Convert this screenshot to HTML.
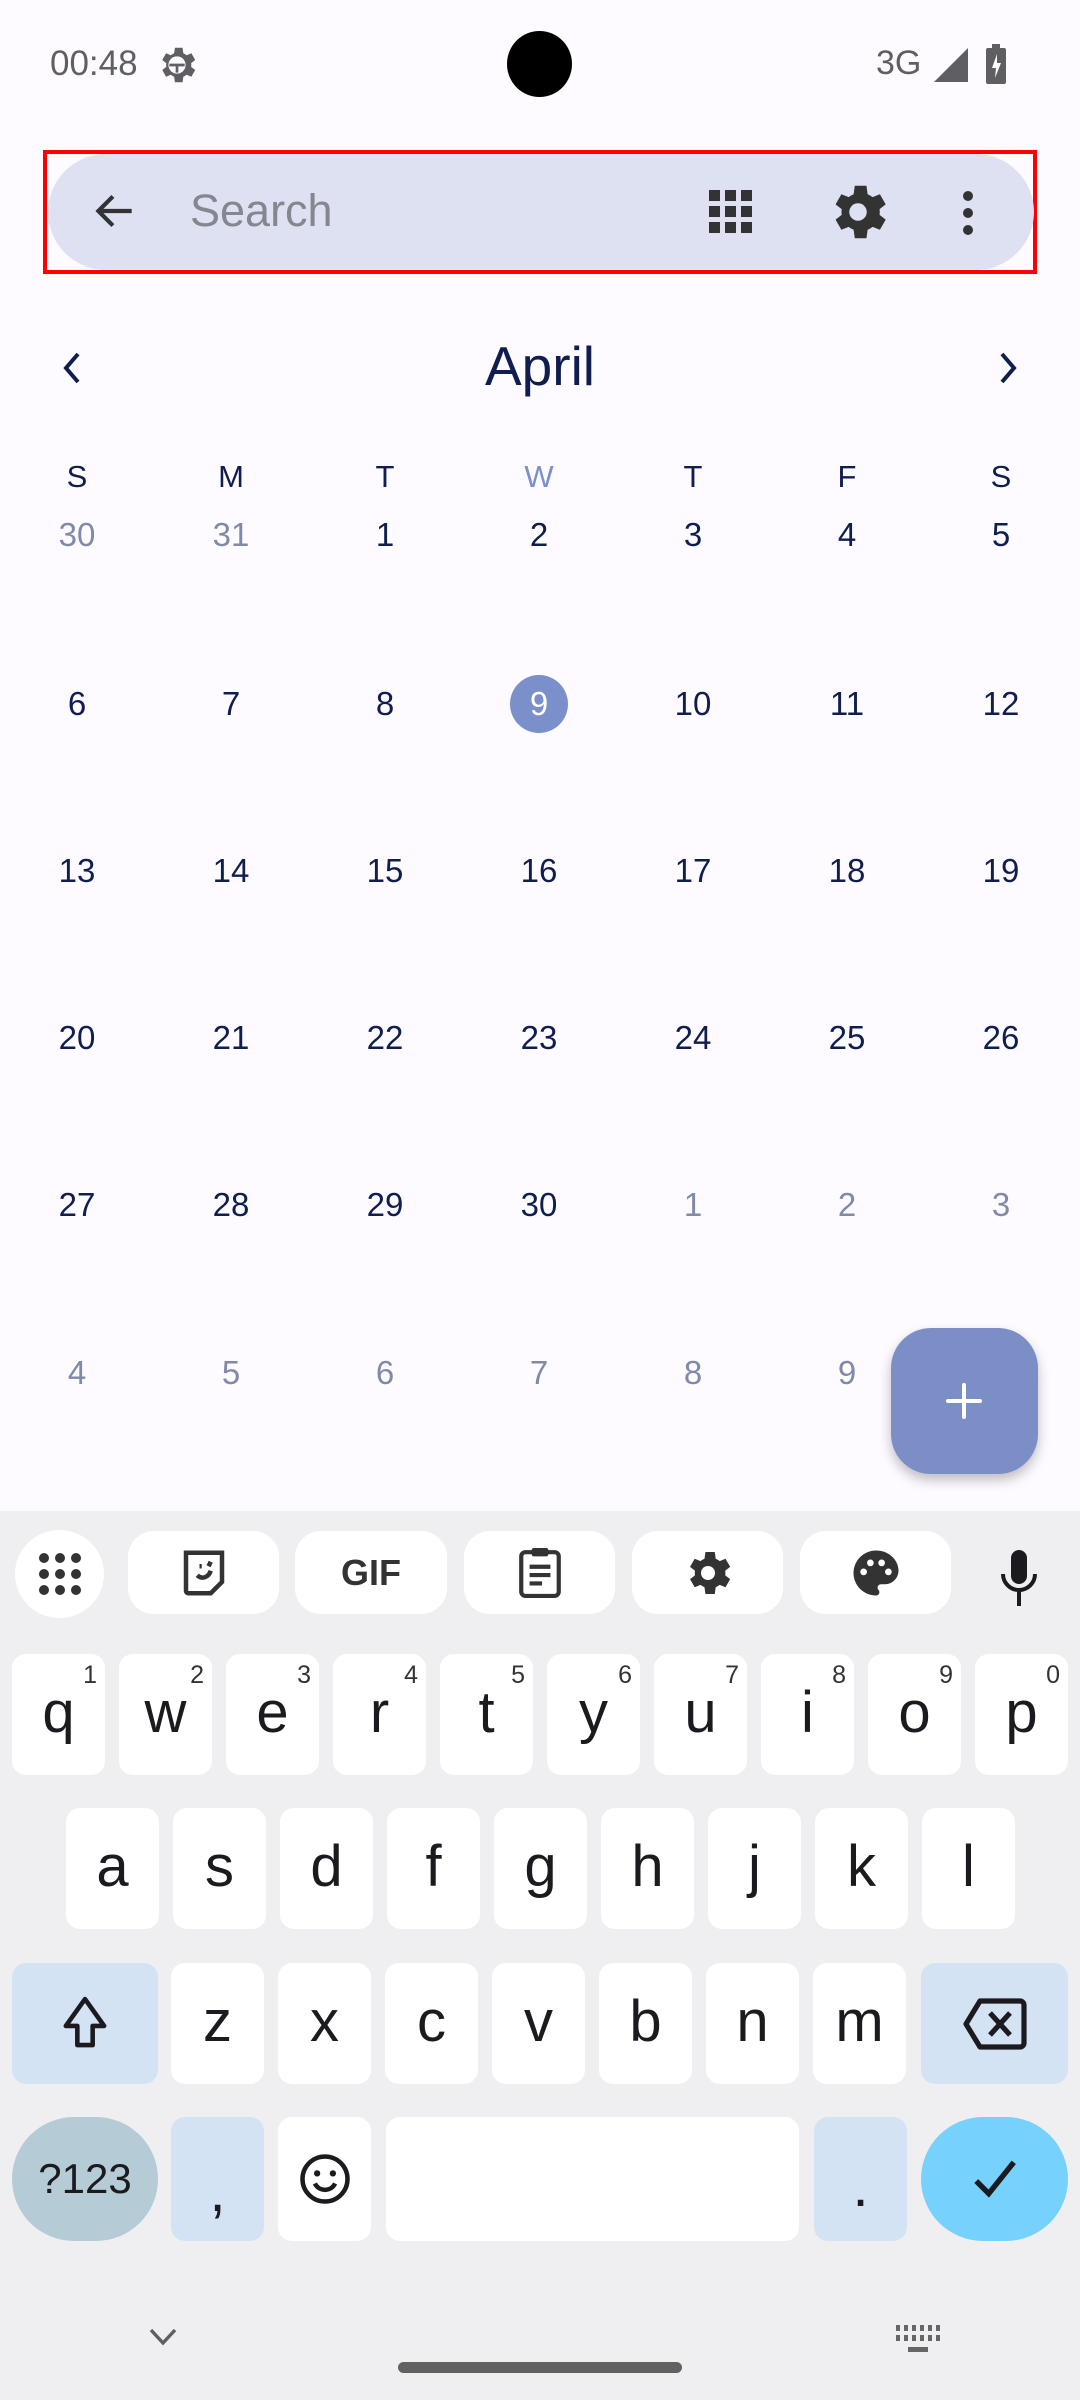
<!DOCTYPE html>
<html><head><meta charset="utf-8"><style>
*{margin:0;padding:0;box-sizing:border-box}
body{width:1080px;height:2400px;background:#fdfbff;font-family:"Liberation Sans",sans-serif;position:relative;overflow:hidden}
.a{position:absolute}
.d{position:absolute;width:154px;text-align:center;font-size:33px;line-height:40px;color:#0f1d4f}
.g{color:#7f89a8}
.h{font-size:31px}
.k{position:absolute;background:#fff;border-radius:14px;height:121px;width:93px;text-align:center;font-size:58px;line-height:118px;color:#1b1b1f}
.k sup{position:absolute;right:8px;top:6px;font-size:25px;line-height:30px;color:#333}
.t{position:absolute;top:1531px;height:83px;background:#fff;border-radius:26px;display:flex;align-items:center;justify-content:center}
</style></head><body>
<!-- status bar -->
<div class="a" style="left:50px;top:44px;font-size:35px;color:#5f5f63">00:48</div>
<svg class="a" style="left:154px;top:42px" width="46" height="46" viewBox="0 0 24 24"><path fill="#5f5f63" d="M19.4 13a7.5 7.5 0 0 0 0-2l2.1-1.6-2-3.5-2.5 1a7 7 0 0 0-1.7-1L14.9 3h-4l-.4 2.9a7 7 0 0 0-1.7 1l-2.5-1-2 3.5L6.4 11a7.5 7.5 0 0 0 0 2l-2.1 1.6 2 3.5 2.5-1a7 7 0 0 0 1.7 1l.4 2.9h4l.4-2.9a7 7 0 0 0 1.7-1l2.5 1 2-3.5z"/><circle cx="12" cy="12" r="4.5" fill="#fdfbff"/><path d="M8 12h8M12 12v4" stroke="#5f5f63" stroke-width="1.4"/></svg>
<div class="a" style="left:507px;top:31px;width:65px;height:66px;border-radius:50%;background:#000"></div>
<div class="a" style="left:876px;top:44px;font-size:34px;color:#5f5f63">3G</div>
<svg class="a" style="left:934px;top:48px" width="34" height="34"><path d="M34 0V34H0z" fill="#5f5f63"/></svg>
<svg class="a" style="left:986px;top:44px" width="20" height="40"><rect x="0" y="4" width="20" height="36" rx="2" fill="#5f5f63"/><rect x="6" y="0" width="8" height="5" fill="#5f5f63"/><path d="M11 10 6 24h4l-1 10 6-15h-4z" fill="#fff"/></svg>
<!-- search -->
<div class="a" style="left:43px;top:150px;width:994px;height:124px;border:4px solid #f00"></div>
<div class="a" style="left:48px;top:154px;width:986px;height:116px;border-radius:58px;background:#dde1f1"></div>
<svg class="a" style="left:90px;top:186px" width="50" height="50" viewBox="0 0 24 24"><path d="M20 12H5M11 5l-7 7 7 7" stroke="#333" stroke-width="2" fill="none"/></svg>
<div class="a" style="left:190px;top:185px;font-size:45px;color:#85868f">Search</div>
<svg class="a" style="left:709px;top:190px" width="44" height="44"><g fill="#333"><rect x="0" y="0" width="11" height="11"/><rect x="16" y="0" width="11" height="11"/><rect x="32" y="0" width="11" height="11"/><rect x="0" y="16" width="11" height="11"/><rect x="16" y="16" width="11" height="11"/><rect x="32" y="16" width="11" height="11"/><rect x="0" y="32" width="11" height="11"/><rect x="16" y="32" width="11" height="11"/><rect x="32" y="32" width="11" height="11"/></g></svg>
<svg class="a" style="left:823px;top:177px" width="70" height="70" viewBox="0 0 24 24"><path fill="#333" d="M19.4 13a7.5 7.5 0 0 0 0-2l2.1-1.6-2-3.5-2.5 1a7 7 0 0 0-1.7-1L14.9 3h-4l-.4 2.9a7 7 0 0 0-1.7 1l-2.5-1-2 3.5L6.4 11a7.5 7.5 0 0 0 0 2l-2.1 1.6 2 3.5 2.5-1a7 7 0 0 0 1.7 1l.4 2.9h4l.4-2.9a7 7 0 0 0 1.7-1l2.5 1 2-3.5z"/><circle cx="12" cy="12" r="3" fill="#dde1f1"/></svg>
<svg class="a" style="left:958px;top:188px" width="20" height="50"><g fill="#333"><circle cx="10" cy="8" r="5"/><circle cx="10" cy="25" r="5"/><circle cx="10" cy="42" r="5"/></g></svg>
<!-- month -->
<svg class="a" style="left:58px;top:350px" width="30" height="36"><path d="M20 4 8 18l12 14" stroke="#0f1d4f" stroke-width="4" fill="none"/></svg>
<div class="a" style="left:0;width:1080px;top:334px;text-align:center;font-size:55px;color:#0f1d4f">April</div>
<svg class="a" style="left:992px;top:350px" width="30" height="36"><path d="M10 4l12 14-12 14" stroke="#0f1d4f" stroke-width="4" fill="none"/></svg>
<!-- headers -->
<div class="d h" style="left:0;top:457px">S</div><div class="d h" style="left:154px;top:457px">M</div><div class="d h" style="left:308px;top:457px">T</div><div class="d h" style="left:462px;top:457px;color:#7b8fcb">W</div><div class="d h" style="left:616px;top:457px">T</div><div class="d h" style="left:770px;top:457px">F</div><div class="d h" style="left:924px;top:457px">S</div>
<!-- row1 -->
<div class="d g" style="left:0;top:515px">30</div><div class="d g" style="left:154px;top:515px">31</div><div class="d" style="left:308px;top:515px">1</div><div class="d" style="left:462px;top:515px">2</div><div class="d" style="left:616px;top:515px">3</div><div class="d" style="left:770px;top:515px">4</div><div class="d" style="left:924px;top:515px">5</div>
<!-- row2 -->
<div class="a" style="left:510px;top:675px;width:58px;height:58px;border-radius:50%;background:#7b8fcb"></div>
<div class="d" style="left:0;top:684px">6</div><div class="d" style="left:154px;top:684px">7</div><div class="d" style="left:308px;top:684px">8</div><div class="d" style="left:462px;top:684px;color:#fff">9</div><div class="d" style="left:616px;top:684px">10</div><div class="d" style="left:770px;top:684px">11</div><div class="d" style="left:924px;top:684px">12</div>
<div class="d" style="left:0;top:851px">13</div><div class="d" style="left:154px;top:851px">14</div><div class="d" style="left:308px;top:851px">15</div><div class="d" style="left:462px;top:851px">16</div><div class="d" style="left:616px;top:851px">17</div><div class="d" style="left:770px;top:851px">18</div><div class="d" style="left:924px;top:851px">19</div>
<div class="d" style="left:0;top:1018px">20</div><div class="d" style="left:154px;top:1018px">21</div><div class="d" style="left:308px;top:1018px">22</div><div class="d" style="left:462px;top:1018px">23</div><div class="d" style="left:616px;top:1018px">24</div><div class="d" style="left:770px;top:1018px">25</div><div class="d" style="left:924px;top:1018px">26</div>
<div class="d" style="left:0;top:1185px">27</div><div class="d" style="left:154px;top:1185px">28</div><div class="d" style="left:308px;top:1185px">29</div><div class="d" style="left:462px;top:1185px">30</div><div class="d g" style="left:616px;top:1185px">1</div><div class="d g" style="left:770px;top:1185px">2</div><div class="d g" style="left:924px;top:1185px">3</div>
<div class="d g" style="left:0;top:1353px">4</div><div class="d g" style="left:154px;top:1353px">5</div><div class="d g" style="left:308px;top:1353px">6</div><div class="d g" style="left:462px;top:1353px">7</div><div class="d g" style="left:616px;top:1353px">8</div><div class="d g" style="left:770px;top:1353px">9</div>
<!-- FAB -->
<div class="a" style="left:891px;top:1328px;width:147px;height:146px;border-radius:40px;background:#7b8fc6;box-shadow:0 6px 12px rgba(0,0,0,.25)"></div>
<svg class="a" style="left:945px;top:1382px" width="38" height="38"><path d="M19 3v32M3 19h32" stroke="#fff" stroke-width="4" stroke-linecap="round"/></svg>
<!-- keyboard -->
<div class="a" style="left:0;top:1511px;width:1080px;height:889px;background:#efeff1"></div>
<div class="t" style="left:15px;width:89px;top:1530px;height:88px;border-radius:50%"><svg width="44" height="44"><g fill="#333"><circle cx="6" cy="6" r="5"/><circle cx="22" cy="6" r="5"/><circle cx="38" cy="6" r="5"/><circle cx="6" cy="22" r="5"/><circle cx="22" cy="22" r="5"/><circle cx="38" cy="22" r="5"/><circle cx="6" cy="38" r="5"/><circle cx="22" cy="38" r="5"/><circle cx="38" cy="38" r="5"/></g></svg></div>
<div class="t" style="left:128px;width:151px"><svg width="54" height="56" viewBox="0 0 24 24"><path d="M4 3h16v13l-5 5H5a1 1 0 0 1-1-1z" stroke="#333" stroke-width="2" fill="none"/><path d="M9 13c2 2 5 1 6-2M10 9h1M15 7l-1 2" stroke="#333" stroke-width="2" fill="none"/></svg></div>
<div class="t" style="left:295px;width:152px;font-weight:bold;font-size:36px;color:#333">GIF</div>
<div class="t" style="left:464px;width:151px"><svg width="50" height="58" viewBox="0 0 24 26"><rect x="3" y="3" width="18" height="21" rx="2" stroke="#333" stroke-width="2" fill="none"/><rect x="8" y="1" width="8" height="4" rx="1" fill="#333"/><path d="M7 10h10M7 14h10M7 18h6" stroke="#333" stroke-width="2"/></svg></div>
<div class="t" style="left:632px;width:151px"><svg width="56" height="56" viewBox="0 0 24 24"><path fill="#333" d="M19.4 13a7.5 7.5 0 0 0 0-2l2.1-1.6-2-3.5-2.5 1a7 7 0 0 0-1.7-1L14.9 3h-4l-.4 2.9a7 7 0 0 0-1.7 1l-2.5-1-2 3.5L6.4 11a7.5 7.5 0 0 0 0 2l-2.1 1.6 2 3.5 2.5-1a7 7 0 0 0 1.7 1l.4 2.9h4l.4-2.9a7 7 0 0 0 1.7-1l2.5 1 2-3.5z"/><circle cx="12" cy="12" r="3" fill="#fff"/></svg></div>
<div class="t" style="left:800px;width:151px"><svg width="54" height="54" viewBox="0 0 24 24"><path fill="#333" d="M12 2a10 10 0 0 0 0 20c1 0 1.5-.8 1.5-1.5 0-.4-.2-.7-.4-1-.3-.3-.4-.6-.4-1 0-.8.7-1.5 1.5-1.5H16a6 6 0 0 0 6-6c0-5-4.5-9-10-9z"/><circle cx="6.5" cy="11.5" r="1.5" fill="#fff"/><circle cx="9.5" cy="7.5" r="1.5" fill="#fff"/><circle cx="14.5" cy="7.5" r="1.5" fill="#fff"/><circle cx="17.5" cy="11.5" r="1.5" fill="#fff"/></svg></div>
<svg class="a" style="left:999px;top:1550px" width="40" height="56" viewBox="0 0 20 28"><rect x="6" y="0" width="8" height="17" rx="4" fill="#1b1b1f"/><path d="M2 12a8 8 0 0 0 16 0M10 20v8" stroke="#1b1b1f" stroke-width="2" fill="none"/></svg>
<!-- row1 -->
<div class="k" style="left:12px;top:1654px">q<sup>1</sup></div><div class="k" style="left:119px;top:1654px">w<sup>2</sup></div><div class="k" style="left:226px;top:1654px">e<sup>3</sup></div><div class="k" style="left:333px;top:1654px">r<sup>4</sup></div><div class="k" style="left:440px;top:1654px">t<sup>5</sup></div><div class="k" style="left:547px;top:1654px">y<sup>6</sup></div><div class="k" style="left:654px;top:1654px">u<sup>7</sup></div><div class="k" style="left:761px;top:1654px">i<sup>8</sup></div><div class="k" style="left:868px;top:1654px">o<sup>9</sup></div><div class="k" style="left:975px;top:1654px">p<sup>0</sup></div>
<!-- row2 -->
<div class="k" style="left:66px;top:1808px">a</div><div class="k" style="left:173px;top:1808px">s</div><div class="k" style="left:280px;top:1808px">d</div><div class="k" style="left:387px;top:1808px">f</div><div class="k" style="left:494px;top:1808px">g</div><div class="k" style="left:601px;top:1808px">h</div><div class="k" style="left:708px;top:1808px">j</div><div class="k" style="left:815px;top:1808px">k</div><div class="k" style="left:922px;top:1808px">l</div>
<!-- row3 -->
<div class="k" style="left:12px;top:1963px;width:146px;background:#d3e3f3;display:flex;align-items:center;justify-content:center"><svg width="46" height="58" viewBox="0 0 24 30"><path d="M12 2 2 16h6v10h8V16h6z" stroke="#1b1b1f" stroke-width="2.4" fill="none" stroke-linejoin="round"/></svg></div>
<div class="k" style="left:171px;top:1963px">z</div><div class="k" style="left:278px;top:1963px">x</div><div class="k" style="left:385px;top:1963px">c</div><div class="k" style="left:492px;top:1963px">v</div><div class="k" style="left:599px;top:1963px">b</div><div class="k" style="left:706px;top:1963px">n</div><div class="k" style="left:813px;top:1963px">m</div>
<div class="k" style="left:921px;top:1963px;width:147px;background:#d3e3f3;display:flex;align-items:center;justify-content:center"><svg width="66" height="54" viewBox="0 0 33 27"><path d="M9 2h20a2 2 0 0 1 2 2v19a2 2 0 0 1-2 2H9L2 13.5z" stroke="#1b1b1f" stroke-width="2.6" fill="none" stroke-linejoin="round"/><path d="M14 8l10 11M24 8 14 19" stroke="#1b1b1f" stroke-width="2.6"/></svg></div>
<!-- row4 -->
<div class="k" style="left:12px;top:2117px;width:146px;height:124px;border-radius:62px;background:#b5cbd6;font-size:42px;line-height:124px">?123</div>
<div class="k" style="left:171px;top:2117px;height:124px;background:#d3e3f3;line-height:150px">,</div>
<div class="k" style="left:278px;top:2117px;height:124px;display:flex;align-items:center;justify-content:center"><svg width="54" height="54" viewBox="0 0 24 24"><circle cx="12" cy="12" r="10" stroke="#1b1b1f" stroke-width="2" fill="none"/><circle cx="8.5" cy="9.5" r="1.4" fill="#1b1b1f"/><circle cx="15.5" cy="9.5" r="1.4" fill="#1b1b1f"/><path d="M7.5 14a5 5 0 0 0 9 0" stroke="#1b1b1f" stroke-width="2" fill="none"/></svg></div>
<div class="k" style="left:386px;top:2117px;width:413px;height:124px"></div>
<div class="k" style="left:814px;top:2117px;height:124px;background:#d3e3f3;line-height:140px">.</div>
<div class="k" style="left:921px;top:2117px;width:147px;height:124px;border-radius:62px;background:#76d1fd;display:flex;align-items:center;justify-content:center"><svg width="50" height="50" viewBox="0 0 24 24"><path d="M3 13l6 6L21 4" stroke="#1b1b1f" stroke-width="2.6" fill="none"/></svg></div>
<!-- nav -->
<svg class="a" style="left:148px;top:2327px" width="30" height="20"><path d="M3 3l12 13L27 3" stroke="#5f5f63" stroke-width="3.4" fill="none"/></svg>
<svg class="a" style="left:896px;top:2325px" width="44" height="30"><g fill="#666"><rect x="0" y="0" width="4" height="6"/><rect x="8" y="0" width="4" height="6"/><rect x="16" y="0" width="4" height="6"/><rect x="24" y="0" width="4" height="6"/><rect x="32" y="0" width="4" height="6"/><rect x="40" y="0" width="4" height="6"/><rect x="0" y="10" width="4" height="6"/><rect x="8" y="10" width="4" height="6"/><rect x="16" y="10" width="4" height="6"/><rect x="24" y="10" width="4" height="6"/><rect x="32" y="10" width="4" height="6"/><rect x="40" y="10" width="4" height="6"/><rect x="12" y="22" width="20" height="5"/></g></svg>
<div class="a" style="left:398px;top:2362px;width:284px;height:11px;border-radius:6px;background:#616161"></div>
</body></html>
